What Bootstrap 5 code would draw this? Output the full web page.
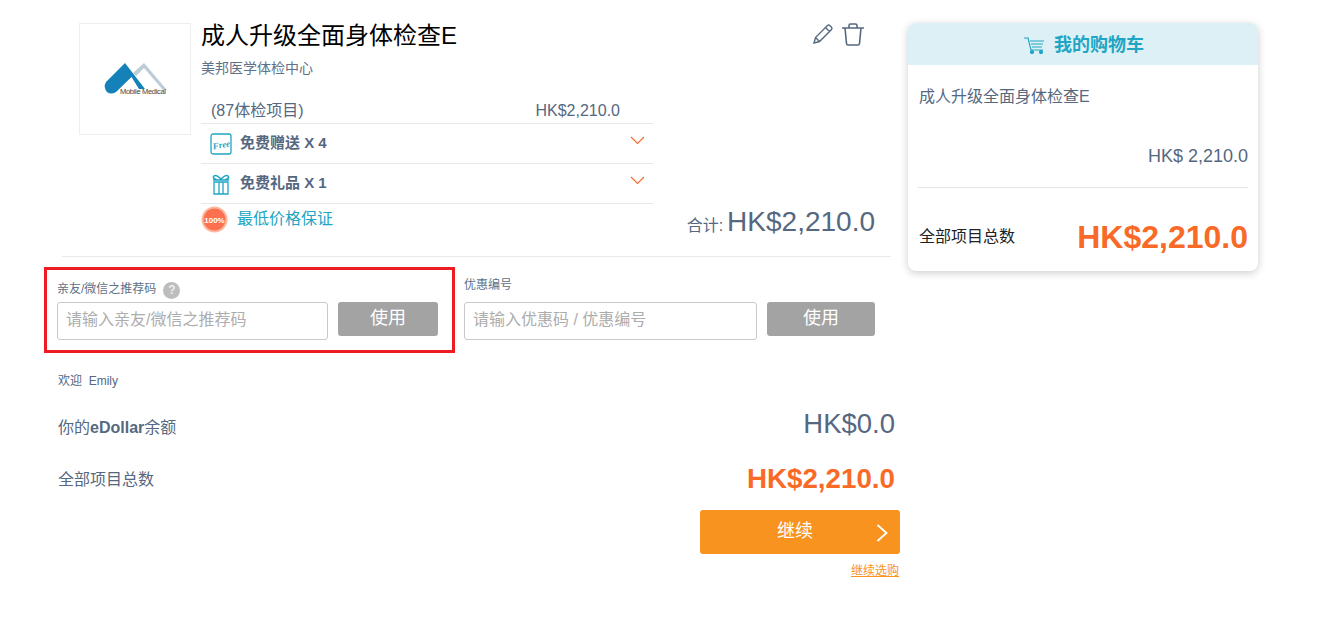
<!DOCTYPE html>
<html lang="zh">
<head>
<meta charset="utf-8">
<title>购物车</title>
<link rel="stylesheet" href="https://cdn.jsdelivr.net/npm/bootstrap@5.3.0/dist/css/bootstrap.min.css">
<style>
body{font-family:"Liberation Sans","Noto Sans CJK SC",sans-serif;color:#556880;background:#fff;}
.page-wrap{padding:23px 0 0 44px;width:1335px;height:624px;overflow:hidden;}
.left-col{width:856px;flex:none;}
.cart-side{width:350px;height:248px;margin-left:8px;flex:none;border-radius:8px;box-shadow:0 2px 8px rgba(0,0,0,.2);overflow:hidden;background:#fff;}
.item-top{height:233px;padding-left:35px;}
.logo-box{width:112px;height:112px;border:1px solid #eee;flex:none;}
.item-body{width:452px;margin-left:10px;flex:none;}
.item-title{font-size:24px;line-height:26px;color:#000;margin:0;font-weight:400;}
.item-sub{font-size:14px;line-height:18px;margin-top:10px;color:#5f7186;}
.item-line{height:27px;padding:0 33px 0 10px;font-size:16px;margin-top:20px;line-height:27px;border-bottom:1px solid #e8e8e8;}
.gift-line{height:40px;border-bottom:1px solid #e8e8e8;padding-left:9px;font-size:15px;font-weight:700;color:#556880;}
.gift-line svg.ico{margin-right:8px;flex:none;}
.chev{margin:0 8px 7px auto;}
.guarantee{font-size:16px;color:#21a5c4;height:30px;}
.item-tools{width:222px;flex:none;position:relative;}
.tool-row{padding-left:159px;gap:8px;}
.sum-line{margin-top:auto;text-align:right;font-size:28px;line-height:32px;margin-bottom:14px;white-space:nowrap;}
.sum-line small{font-size:16px;margin-right:4px;}
.divider{height:1px;background:#eaeaea;margin-left:18px;margin-right:9px;}
.promo-wrap{margin-top:10px;height:86px;}
.red-box{width:411px;height:86px;border:3px solid #ed1c24;padding:12px 0 0 10px;flex:none;}
.field-label{font-size:12px;line-height:14px;color:#5f7186;height:15px;}
.help-dot{width:17px;height:17px;border-radius:50%;background:#bdbdbd;color:#eee;font-size:12px;font-weight:700;line-height:17px;text-align:center;margin-left:7px;}
.promo-input.form-control{height:38px;border:1px solid #c9c9c9;border-radius:3px;font-size:16px;padding:0 8px 2px;color:#555;box-shadow:none;}
.promo-input.form-control::placeholder{color:#adadad;}
.use-btn.btn{background:#a3a3a3;color:#fff;border:0;border-radius:3px;height:34px;font-size:18px;line-height:30px;padding:0 0 2px;}
.input-a{width:271px;}
.btn-a{width:100px;margin-left:10px;}
.coupon{margin-left:9px;padding-top:11px;}
.row-a{margin-top:5px;}
.row-b{margin-top:9px;}
.input-b{width:293px;}
.btn-b{width:108px;margin-left:10px;}
.welcome{font-size:12px;margin:21px 0 0 14px;line-height:14px;}
.balance-line{margin:22px 0 0 14px;width:837px;height:36px;font-size:16px;}
.balance-val{font-size:27.500px;margin-bottom:9px;}
.total-line{margin:16px 0 0 14px;width:837px;height:36px;font-size:16px;}
.total-val{font-size:27.750px;font-weight:700;color:#f96a27;margin-bottom:2px;}
.next-btn.btn{display:block;width:200px;height:44px;margin:12px 0 0 656px;background:#f8931f;border:0;border-radius:3px;color:#fff;font-size:18px;padding:0 10px 0 0;position:relative;line-height:42px;}
.next-btn svg{position:absolute;right:12px;top:14px;}
.more-link{display:block;text-align:right;width:855px;font-size:12px;line-height:14px;margin-top:10px;color:#f8931f;}
.cart-head{height:42px;background:#dcf0f5;color:#21a5c4;font-size:18px;font-weight:700;padding:3px 0 0 2px;}
.cart-head svg{margin-right:9px;}
.cart-name{font-size:16px;line-height:20px;padding:22px 10px 0 11px;}
.cart-price{font-size:18px;line-height:20px;text-align:right;padding:39px 10px 0 0;}
.cart-rule{height:1px;background:#e6e6e6;margin:21px 10px 0 10px;}
.cart-total{padding:25px 10px 0 11px;color:#222;font-size:16px;}
.cart-total-val{font-size:32px;font-weight:700;color:#f96a27;line-height:48px;}
</style>
</head>
<body>
<div class="page-wrap d-flex">
  <div class="left-col">
    <div class="item-top d-flex">
      <div class="logo-box d-flex align-items-center justify-content-center">
        <svg width="64" height="36" viewBox="0 0 64 36">
          <path d="M30 12 L41 2 L64 29 H60 L41 7 L33 15 Z" fill="#bccdd6"/>
          <path d="M22 2 L42 28 H36 L28.500 16 L13 31 Q8 34 4 31 Q0 26 3 21 Z" fill="#1482b8"/>
          <text x="17" y="33" font-size="7.500" textLength="46" fill="#444" font-family="Liberation Sans">Mobile Medical</text>
        </svg>
      </div>
      <div class="item-body">
        <h1 class="item-title">成人升级全面身体检查E</h1>
        <div class="item-sub">美邦医学体检中心</div>
        <div class="item-line d-flex justify-content-between"><span>(87体检项目)</span><span>HK$2,210.0</span></div>
        <div class="gift-line d-flex align-items-center">
          <svg class="ico" width="22" height="22" viewBox="0 0 22 22" fill="none" stroke="#21a5c4" stroke-width="1.300"><rect x="1" y="1" width="20" height="20" rx="2"/><text x="2.500" y="15" font-size="9" font-style="italic" fill="#21a5c4" stroke="none" transform="rotate(-10 11 11)" font-family="Liberation Serif">Free</text></svg>
          <span>免费赠送 X 4</span>
          <svg class="chev" width="15" height="9" viewBox="0 0 15 9" fill="none" stroke="#f96a27" stroke-width="1.200"><path d="M1 1l6.500 6.500L14 1"/></svg>
        </div>
        <div class="gift-line d-flex align-items-center">
          <svg class="ico" width="22" height="22" viewBox="0 0 22 22" fill="none" stroke="#21a5c4" stroke-width="1.300"><path d="M4 9h14v12H4zM9 9v12M13 9v12"/><path d="M3 7h16M11 6Q6 1 4 3t3 4M11 6q5-5 7-3t-3 4" stroke-width="1.500"/></svg>
          <span>免费礼品 X 1</span>
          <svg class="chev" width="15" height="9" viewBox="0 0 15 9" fill="none" stroke="#f96a27" stroke-width="1.200"><path d="M1 1l6.500 6.500L14 1"/></svg>
        </div>
        <div class="guarantee d-flex align-items-center">
          <svg width="27" height="27" viewBox="0 0 27 27" style="margin-right:9px;flex:none"><circle cx="13.500" cy="13.500" r="13" fill="#fcb9a0"/><circle cx="13.500" cy="13.500" r="11" fill="#fb7150"/><text x="13.500" y="16.500" font-size="8" font-weight="700" fill="#fff" text-anchor="middle" font-family="Liberation Sans">100%</text></svg>
          <span>最低价格保证</span>
        </div>
      </div>
      <div class="item-tools d-flex flex-column">
        <div class="tool-row d-flex">
          <svg width="22" height="22" viewBox="0 0 22 22" fill="none" stroke="#556880" stroke-width="1.400"><path d="M2 20l1.500-5.500L15.500 2.500q1.200-1 2.300 0l1.700 1.700q1 1.100 0 2.300L7.500 18.500zM3.500 14.500l4 4M13.500 4.500l4 4"/></svg>
          <svg width="22" height="23" viewBox="0 0 22 23" fill="none" stroke="#556880" stroke-width="1.600"><path d="M0 5h22M3 5l1.500 15.500q.2 1.500 1.700 1.500h9.600q1.500 0 1.700-1.500L19 5M7 5V2.500q0-1.500 1.500-1.500h5q1.500 0 1.500 1.500V5"/></svg>
        </div>
        <div class="sum-line"><small>合计:</small>HK$2,210.0</div>
      </div>
    </div>
    <div class="divider"></div>
    <div class="promo-wrap d-flex">
      <div class="red-box">
        <div class="field-label d-flex"><span>亲友/微信之推荐码</span><span class="help-dot">?</span></div>
        <div class="d-flex align-items-start row-a">
          <input class="promo-input form-control input-a" placeholder="请输入亲友/微信之推荐码">
          <button type="button" class="use-btn btn btn-a flex-none">使用</button>
        </div>
      </div>
      <div class="coupon">
        <div class="field-label">优惠编号</div>
        <div class="d-flex align-items-start row-b">
          <input class="promo-input form-control input-b" placeholder="请输入优惠码 / 优惠编号">
          <button type="button" class="use-btn btn btn-b flex-none">使用</button>
        </div>
      </div>
    </div>
    <div class="welcome">欢迎&nbsp;&nbsp;Emily</div>
    <div class="balance-line d-flex justify-content-between align-items-center"><span>你的<b>eDollar</b>余额</span><span class="balance-val">HK$0.0</span></div>
    <div class="total-line d-flex justify-content-between align-items-center"><span>全部项目总数</span><span class="total-val">HK$2,210.0</span></div>
    <a href="#" class="next-btn btn">继续
      <svg width="12" height="18" viewBox="0 0 12 18" fill="none" stroke="#fff" stroke-width="1.800"><path d="M1.500 1l9 8-9 8"/></svg>
    </a>
    <a href="#" class="more-link">继续选购</a>
  </div>
  <aside class="cart-side">
    <div class="cart-head d-flex align-items-center justify-content-center">
      <svg width="21" height="17" viewBox="0 0 21 17" fill="none" stroke="#21a5c4" stroke-width="1.200"><path d="M0 1h4l3 12h12M6 4h14M7 7h12M8 10h10"/><circle cx="8" cy="15" r="1.500" fill="#21a5c4"/><circle cx="17" cy="15" r="1.500" fill="#21a5c4"/></svg>
      <span>我的购物车</span>
    </div>
    <div class="cart-name">成人升级全面身体检查E</div>
    <div class="cart-price">HK$ 2,210.0</div>
    <div class="cart-rule"></div>
    <div class="cart-total d-flex justify-content-between align-items-center"><span>全部项目总数</span><span class="cart-total-val">HK$2,210.0</span></div>
  </aside>
</div>
<script src="https://cdn.jsdelivr.net/npm/bootstrap@5.3.0/dist/js/bootstrap.bundle.min.js"></script>
</body>
</html>
